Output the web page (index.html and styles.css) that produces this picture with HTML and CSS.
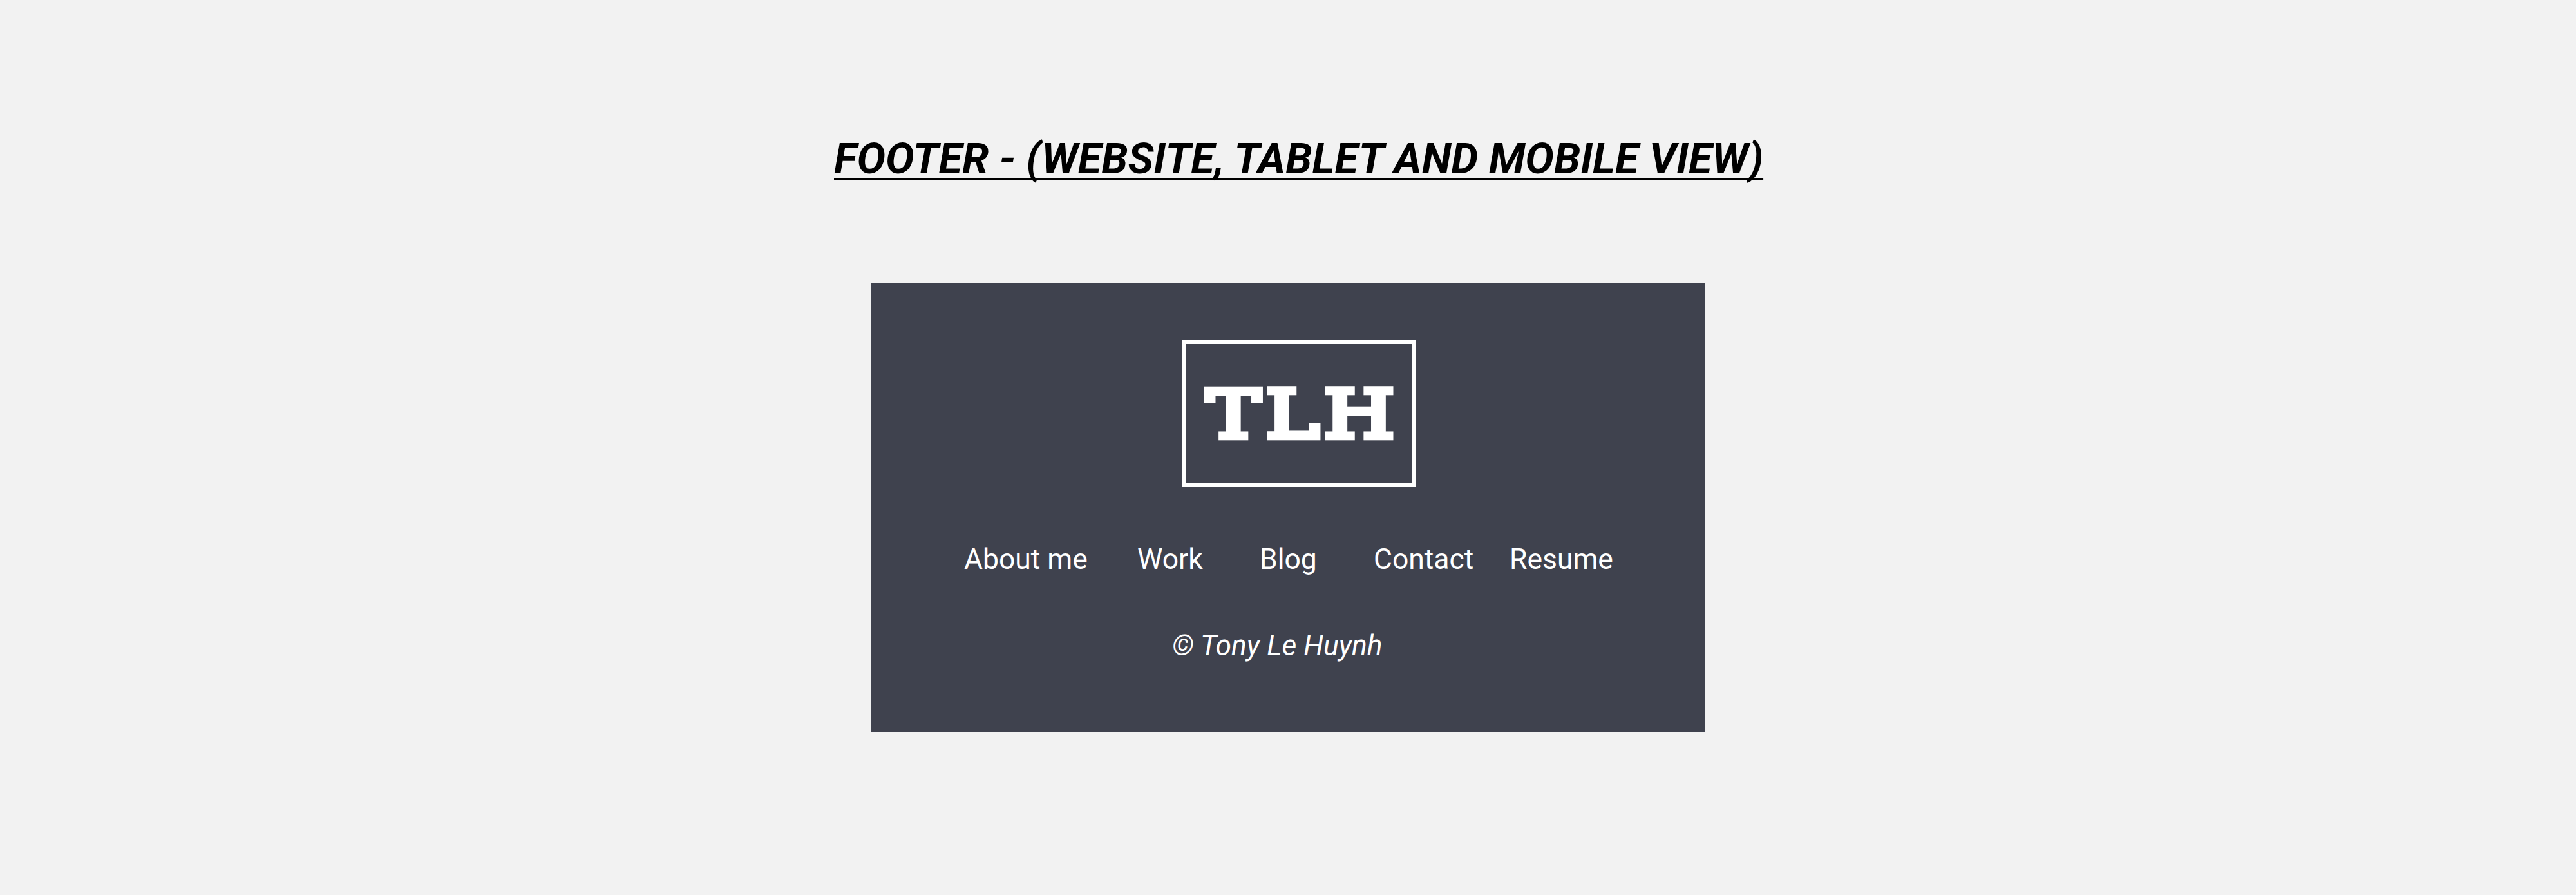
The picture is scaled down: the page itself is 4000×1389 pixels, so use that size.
FILE: index.html
```html
<!DOCTYPE html>
<html lang="en">
<head>
<meta charset="utf-8">
<title>Footer</title>
<link rel="stylesheet" href="styles.css">
</head>
<body>
<main class="page">
  <h1 class="title"><span class="title-text">FOOTER - (WEBSITE, TABLET AND MOBILE VIEW)</span></h1>
  <footer class="footer">
    <a class="logo">
      <svg class="logo-mark" viewBox="0 0 352 215" width="352" height="215">
        <text class="logo-letter" transform="translate(32.6 144.6) scale(1.22 1)">T</text>
        <text class="logo-letter" transform="translate(125 144.6) scale(1.206 1)">L</text>
        <text class="logo-letter" transform="translate(214.9 144.6) scale(1.22 1)">H</text>
      </svg>
    </a>
    <nav class="nav">
      <a class="link">About me</a>
      <a class="link">Work</a>
      <a class="link">Blog</a>
      <a class="link">Contact</a>
      <a class="link">Resume</a>
    </nav>
    <p class="copyright">© Tony Le Huynh</p>
  </footer>
</main>
</body>
</html>
```
FILE: styles.css
```css
* { box-sizing: border-box; margin: 0; padding: 0; }

body {
  background: #f2f2f2;
  font-family: Roboto, sans-serif;
}

.page {
  display: flex;
  flex-direction: column;
  align-items: flex-start;
  height: 1389px;
  padding: 206px 0 0 1295px;
  overflow: hidden;
}

.title {
  height: 233px;
  font-size: 66.67px;
  line-height: 80px;
  font-weight: 700;
  font-style: italic;
  white-space: nowrap;
  color: #000;
}

.title-text {
  text-decoration: underline;
  text-decoration-thickness: 3px;
  text-decoration-skip-ink: none;
  text-underline-offset: 7px;
}

.footer {
  display: flex;
  flex-direction: column;
  width: 1294px;
  height: 697px;
  margin-left: 58px;
  padding-top: 88px;
  background: #3f424e;
  color: #fff;
}

.logo {
  width: 362px;
  height: 229px;
  margin-left: 483px;
  border: solid #fff;
  border-width: 7px 5px;
}

.logo-mark { display: block; }

.logo-letter {
  font-family: "DejaVu Serif", serif;
  font-size: 102.6px;
  fill: #fff;
  stroke: #fff;
  stroke-width: 9.5px;
  vector-effect: non-scaling-stroke;
}

.nav {
  display: grid;
  grid-template-columns: 269px 190px 177px 211px 170px;
  justify-items: start;
  margin: 86px 0 0 144px;
  font-size: 44.44px;
  line-height: 52px;
  white-space: nowrap;
}

.copyright {
  margin: 82px 0 0 467px;
  font-size: 44.44px;
  line-height: 52px;
  font-style: italic;
  white-space: nowrap;
}
```
